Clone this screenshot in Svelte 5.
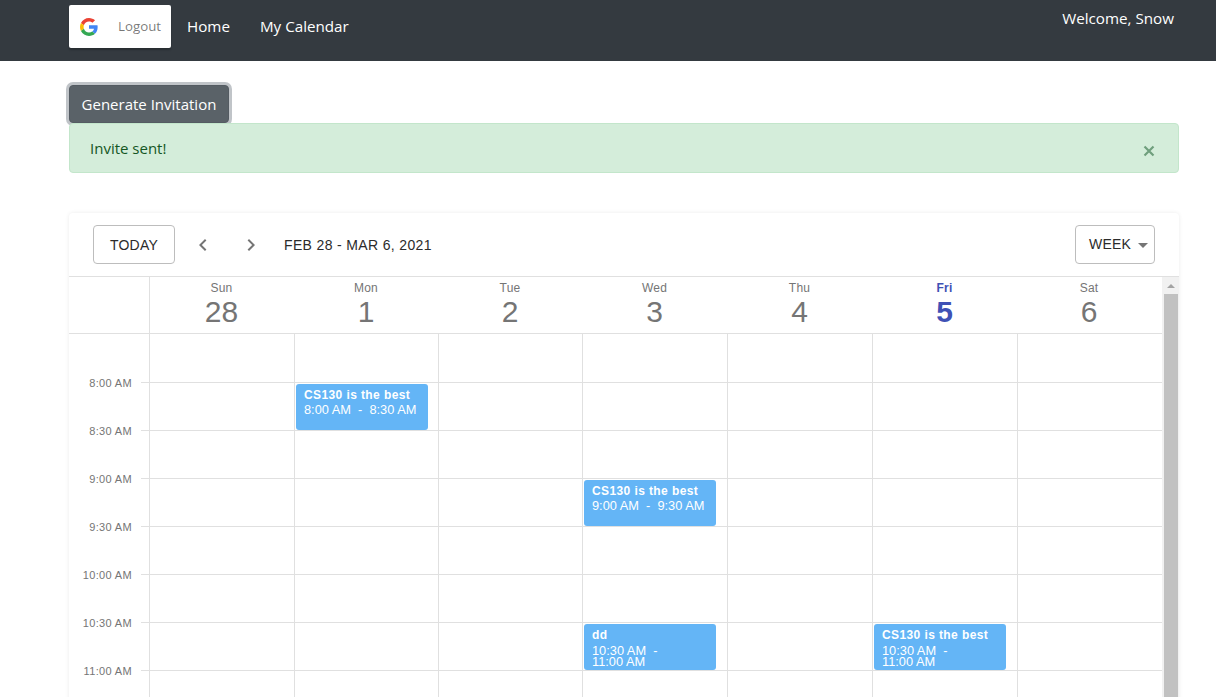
<script>
	const slots = ['8:00 AM', '8:30 AM', '9:00 AM', '9:30 AM', '10:00 AM', '10:30 AM', '11:00 AM'];
	const days = [
		{ name: 'Sun', num: 28, events: [] },
		{ name: 'Mon', num: 1, events: [{ title: 'CS130 is the best', time: '8:00 AM  -  8:30 AM', slot: 0 }] },
		{ name: 'Tue', num: 2, events: [] },
		{ name: 'Wed', num: 3, events: [
			{ title: 'CS130 is the best', time: '9:00 AM  -  9:30 AM', slot: 2 },
			{ title: 'dd', time: '10:30 AM  -  11:00 AM', slot: 5, wrap: true }
		] },
		{ name: 'Thu', num: 4, events: [] },
		{ name: 'Fri', num: 5, current: true, events: [{ title: 'CS130 is the best', time: '10:30 AM  -  11:00 AM', slot: 5, wrap: true }] },
		{ name: 'Sat', num: 6, events: [] }
	];
	const rows = 8;
</script>

<nav class="navbar">
	<div class="nav-left">
		<button class="google">
			<svg width="18" height="18" viewBox="0 0 18 18">
				<path fill="#EA4335" d="M9 3.48c1.69 0 2.83.73 3.48 1.34l2.54-2.48C13.46.89 11.43 0 9 0 5.48 0 2.44 2.02.96 4.96l2.91 2.26C4.6 5.05 6.62 3.48 9 3.48z"/>
				<path fill="#4285F4" d="M17.64 9.2c0-.74-.06-1.28-.19-1.84H9v3.34h4.96c-.1.83-.64 2.08-1.84 2.92l2.84 2.2c1.7-1.57 2.68-3.88 2.68-6.62z"/>
				<path fill="#FBBC05" d="M3.88 10.78A5.54 5.54 0 0 1 3.58 9c0-.62.11-1.22.29-1.78L.96 4.96A9.008 9.008 0 0 0 0 9c0 1.45.35 2.82.96 4.04l2.92-2.26z"/>
				<path fill="#34A853" d="M9 18c2.43 0 4.47-.8 5.96-2.18l-2.84-2.2c-.76.53-1.78.9-3.12.9-2.38 0-4.4-1.57-5.12-3.74L.97 13.04C2.45 15.98 5.48 18 9 18z"/>
			</svg>
			<span>Logout</span>
		</button>
		<a class="nav-link" href="#home">Home</a>
		<a class="nav-link" href="#calendar">My Calendar</a>
	</div>
	<span class="welcome">Welcome, Snow</span>
</nav>

<main class="container">
	<button class="generate">Generate Invitation</button>
	<div class="alert">
		<span>Invite sent!</span>
		<svg class="close" width="12" height="12" viewBox="0 0 12 12">
			<path d="M1.5 1.5l9 9M10.5 1.5l-9 9" stroke="#6f9f7d" stroke-width="2.2" fill="none"/>
		</svg>
	</div>

	<section class="calendar">
		<div class="toolbar">
			<button class="outline today-btn">TODAY</button>
			<button class="arrow" aria-label="Previous">
				<svg width="24" height="24" viewBox="0 0 24 24"><path fill="#757575" d="M15.41 7.41L14 6l-6 6 6 6 1.41-1.41L10.83 12z"/></svg>
			</button>
			<button class="arrow" aria-label="Next">
				<svg width="24" height="24" viewBox="0 0 24 24"><path fill="#757575" d="M10 6L8.59 7.41 13.17 12l-4.58 4.59L10 18l6-6z"/></svg>
			</button>
			<span class="range">FEB 28 - MAR 6, 2021</span>
			<button class="outline week">WEEK<i class="caret"></i></button>
		</div>

		<div class="frame">
			<div class="grid-area">
				<div class="head">
					<div class="corner"></div>
					{#each days as d}
						<div class="head-cell" class:current={d.current}>
							<div class="dow">{d.name}</div>
							<div class="num">{d.num}</div>
						</div>
					{/each}
				</div>
				<div class="body">
					<div class="times">
						<div class="time-row first"></div>
						{#each slots as s}
							<div class="time-row"><span>{s}</span></div>
						{/each}
					</div>
					{#each days as d}
						<div class="col">
							<div class="cell first"></div>
							{#each Array(rows) as _}
								<div class="cell"></div>
							{/each}
							{#each d.events as e}
								<div class="event" style="top: {e.slot * 48 + 50}px">
									<div class="ev-title">{e.title}</div>
									<div class="ev-time" class:wrap={e.wrap}>{e.time}</div>
								</div>
							{/each}
						</div>
					{/each}
				</div>
			</div>
			<div class="scrollbar">
				<div class="up"></div>
				<div class="thumb"></div>
			</div>
		</div>
	</section>
</main>

<style>
	:global(html), :global(body) {
		height: 697px;
		overflow: hidden;
		background: #fff;
	}
	button {
		font: inherit;
		cursor: pointer;
	}
	.navbar {
		height: 61px;
		box-sizing: border-box;
		background: #343a40;
		padding: 5px 42px 0 69px;
		display: flex;
		justify-content: space-between;
		align-items: flex-start;
		font-family: "Open Sans", "Noto Sans", sans-serif;
		font-size: 15.2px;
		color: #fff;
	}
	.nav-left {
		display: flex;
		align-items: center;
	}
	.google {
		width: 102px;
		height: 43px;
		display: flex;
		align-items: center;
		background: #fff;
		border: 0;
		border-radius: 2px;
		padding: 0 0 0 11px;
		box-shadow: 0 2px 2px rgba(0, 0, 0, 0.24);
		color: rgba(0, 0, 0, 0.54);
		font-size: 13.3px;
	}
	.google span {
		margin-left: 20px;
		margin-top: -2px;
	}
	.nav-link {
		color: #fff;
		text-decoration: none;
		margin-left: 16px;
		margin-right: -1px;
		margin-top: -2px;
	}
	.nav-link + .nav-link {
		margin-left: 31px;
	}
	.welcome {
		margin-top: 3px;
	}
	.container {
		padding: 24px 37px 0 69px;
		font-family: "Open Sans", "Noto Sans", sans-serif;
	}
	.generate {
		display: block;
		width: 160px;
		height: 38px;
		background: #5a6268;
		color: #fff;
		border: 1px solid #545b62;
		border-radius: 4px;
		box-shadow: 0 0 0 3px rgba(130, 138, 145, 0.5);
		font-size: 15px;
		padding: 0;
	}
	.alert {
		position: relative;
		height: 50px;
		box-sizing: border-box;
		background: #d4edda;
		border: 1px solid #c3e6cb;
		border-radius: 4px;
		color: #155724;
		font-size: 15px;
		padding: 14px 20px;
		line-height: 20px;
	}
	.close {
		position: absolute;
		right: 23px;
		top: 21px;
	}
	.calendar {
		margin-top: 40px;
		width: 1110px;
		background: #fff;
		border-radius: 4px 4px 0 0;
		box-shadow: 0 0 4px rgba(0, 0, 0, 0.08);
		font-family: "Liberation Sans", Arial, sans-serif;
	}
	.toolbar {
		height: 64px;
		box-sizing: border-box;
		display: flex;
		align-items: center;
		padding: 0 24px;
		color: #2b2b2b;
		border-bottom: 1px solid #e0e0e0;
	}
	.outline {
		height: 39px;
		background: #fff;
		border: 1px solid #bdbdbd;
		border-radius: 4px;
		color: #2b2b2b;
		font-size: 14px;
		letter-spacing: 0.2px;
		padding: 0;
	}
	.today-btn {
		width: 82px;
		margin-right: 16px;
	}
	.arrow {
		width: 24px;
		height: 24px;
		padding: 0;
		border: 0;
		background: none;
		margin-right: 24px;
	}
	.arrow + .arrow {
		margin-right: 21px;
	}
	.range {
		font-size: 14px;
		letter-spacing: 0.35px;
	}
	.week {
		margin-left: auto;
		width: 80px;
		display: flex;
		align-items: center;
		padding: 0 0 2px 13px;
	}
	.caret {
		width: 0;
		height: 0;
		margin-left: 7px;
		margin-top: 4px;
		border-left: 5px solid transparent;
		border-right: 5px solid transparent;
		border-top: 5px solid #757575;
	}
	.frame {
		display: flex;
	}
	.grid-area {
		flex: 1;
		min-width: 0;
	}
	.head, .body {
		display: grid;
		grid-template-columns: 81px 145px 144px 144px 145px 145px 145px 1fr;
	}
	.head {
		height: 57px;
		box-sizing: border-box;
		border-bottom: 1px solid #e0e0e0;
	}
	.corner {
		border-right: 1px solid #e0e0e0;
	}
	.head-cell {
		text-align: center;
		color: #757575;
		padding: 4px 2px 0 0;
	}
	.dow {
		font-size: 12px;
		line-height: 14px;
		letter-spacing: 0.2px;
	}
	.num {
		font-size: 30px;
		line-height: 34px;
	}
	.head-cell.current {
		color: #3f51b5;
		font-weight: 700;
	}
	.times {
		border-right: 1px solid #e0e0e0;
		box-sizing: border-box;
	}
	.time-row {
		height: 48px;
		box-sizing: border-box;
		position: relative;
	}
	.time-row:not(.first)::after {
		content: '';
		position: absolute;
		right: 0;
		top: 0;
		width: 8px;
		border-top: 1px solid #e0e0e0;
	}
	.time-row span {
		position: absolute;
		right: 17px;
		top: -5px;
		font-size: 11px;
		line-height: 13px;
		color: #757575;
		letter-spacing: 0.35px;
	}
	.col {
		position: relative;
		border-right: 1px solid #e0e0e0;
		box-sizing: border-box;
	}
	.col:last-child {
		border-right: 0;
	}
	.cell {
		height: 48px;
		box-sizing: border-box;
		border-bottom: 1px solid #e0e0e0;
	}
	.cell.first {
		height: 49px;
	}
	.event {
		position: absolute;
		left: 1px;
		width: 132px;
		height: 46px;
		box-sizing: border-box;
		background: #64b5f6;
		border-radius: 3px;
		color: #fff;
		padding: 4px 8px;
		font-size: 12px;
		overflow: hidden;
	}
	.ev-title {
		font-weight: 700;
		line-height: 14px;
		letter-spacing: 0.4px;
		white-space: nowrap;
	}
	.ev-time {
		font-size: 12.8px;
		line-height: 16px;
		white-space: pre;
	}
	.ev-time.wrap {
		white-space: pre-wrap;
		line-height: 11px;
		margin-top: 3px;
		width: 85px;
	}
	.scrollbar {
		width: 17px;
		flex: none;
		background: #f1f1f1;
	}
	.up {
		height: 17px;
		position: relative;
	}
	.up::after {
		content: '';
		position: absolute;
		left: 5px;
		top: 7px;
		border-left: 4px solid transparent;
		border-right: 4px solid transparent;
		border-bottom: 4px solid #a3a3a3;
	}
	.thumb {
		margin: 0 1px 0 2px;
		height: 420px;
		background: #c1c1c1;
	}
</style>
